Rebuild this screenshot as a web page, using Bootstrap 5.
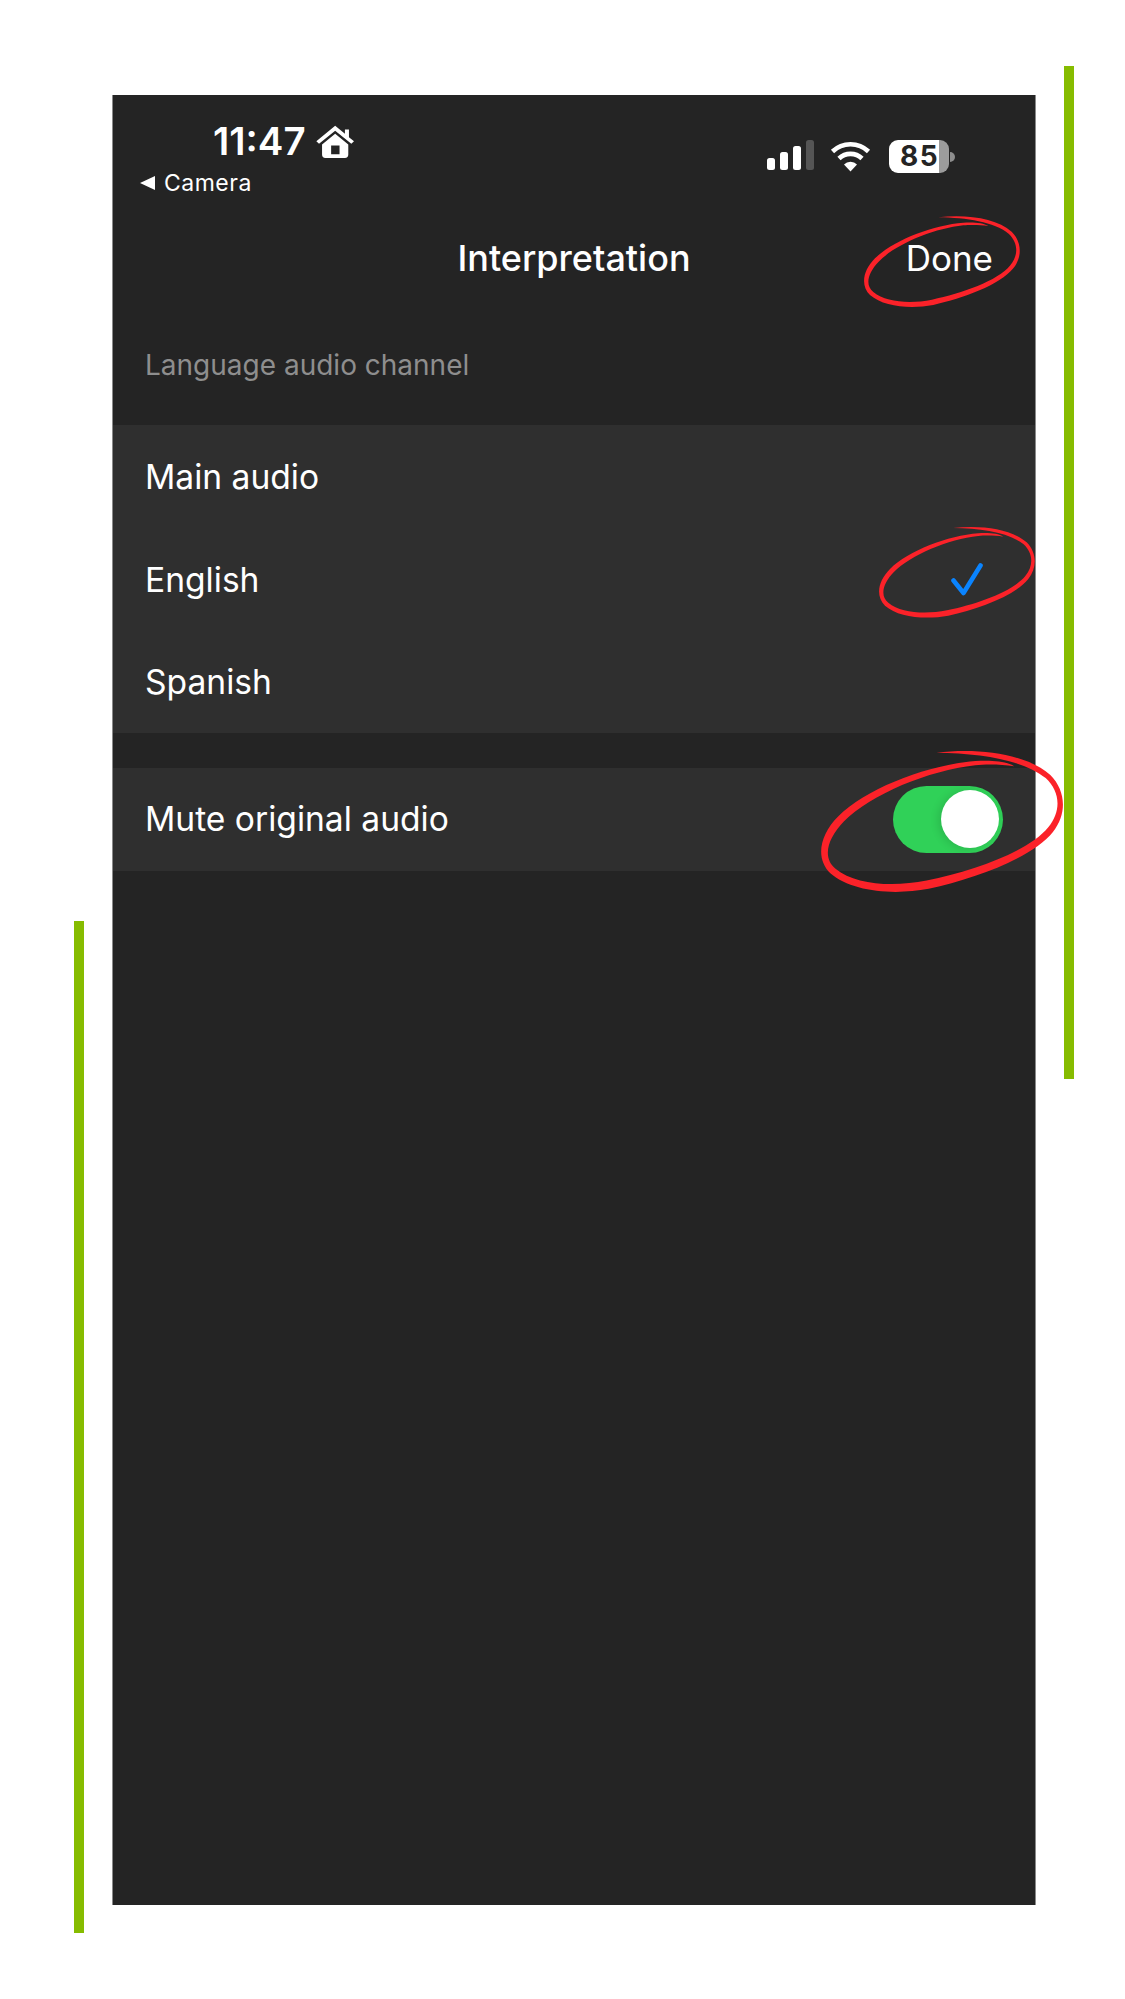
<!DOCTYPE html><html lang="en">
<head>
  <meta charset="UTF-8" />
  <meta name="viewport" content="width=device-width, initial-scale=1.0" />
  <title>Interpretation</title>
  <link href="https://cdn.jsdelivr.net/npm/bootstrap@5.3.0/dist/css/bootstrap.min.css" rel="stylesheet">
  <style>
    body { background: #fff; font-family: Inter, "Liberation Sans", sans-serif; color: #fff; }
    .sheet { width: 1125px; height: 1999px; overflow: hidden; }
    .accent-left { width: 10px; height: 1012px; margin: 921px 28px 0 74px; background: #86bc00; flex: none; }
    .accent-right { width: 10px; height: 1013px; margin: 66px 0 0 28px; background: #86bc00; flex: none; }
    .phone { width: 924px; height: 1810px; margin-top: 95px; background: #242424; border-left: 1px solid #8a8a8a; border-right: 1px solid #8a8a8a; flex: none; }
    .status-area { height: 125px; }
    .status-left { padding: 24px 0 0 27px; }
    .clock-row { padding-left: 73px; height: 44px; gap: 10px; }
    .clock { font-size: 38.5px; font-weight: 600; line-height: 44px; }
    .back-app { font-size: 23px; line-height: 28px; margin-top: 6px; gap: 9px; letter-spacing: .5px; }
    .back-arrow { width: 0; height: 0; border-top: 7.5px solid transparent; border-bottom: 7.5px solid transparent; border-right: 15px solid #fff; }
    .status-right { padding: 45px 80px 0 0; gap: 15px; }
    .battery-wrap { margin-left: 3px; }
    .battery { width: 60px; height: 33px; border-radius: 9px; background: linear-gradient(90deg, #fff 84%, #9c9c9c 84%); color: #242424; font-size: 28px; font-weight: 700; line-height: 33px; padding-left: 11px; letter-spacing: 1.5px; white-space: nowrap; }
    .battery-tip { width: 5px; height: 10px; margin-left: 1px; border-radius: 0 5px 5px 0; background: #8d8d8d; }
    .nav-row { height: 76px; padding-right: 42px; }
    .nav-title { font-size: 36px; font-weight: 500; line-height: 76px; white-space: nowrap; }
    .nav-done { font-size: 35px; line-height: 76px; }
    .group-label { font-size: 28px; line-height: 40px; color: #8e8e8e; padding: 49px 32px 40px; }
    .rows { background: #2f2f2f; font-size: 33.6px; }
    .rows-gap { margin-top: 35px; }
    .row-item { height: 102.67px; padding: 2px 52px 0 32px; }
    .row-item.has-switch { padding: 0 32px; }
    .ios-switch { width: 110px; height: 67px; border-radius: 34px; background: #30d158; padding: 0 4px; }
    .ios-knob { width: 58px; height: 58px; border-radius: 50%; background: #fff; box-shadow: -3px 1px 8px rgba(0, 0, 0, .12); }
    .scribbles { top: 0; left: 0; pointer-events: none; }
  </style>
</head>
<body>
  <div class="sheet d-flex align-items-start position-relative">
    <div class="accent-left"></div>

    <div class="phone">
      <!-- Status bar -->
      <div class="status-area d-flex justify-content-between">
        <div class="status-left">
          <div class="clock-row d-flex align-items-center">
            <span class="clock">11:47</span>
            <svg width="38" height="33" viewBox="620 105 113 98">
              <path d="M677 107 L706 131 V118 H718 V141 L733 153 L725 161 L677 122 L629 161 L621 153 Z" fill="#fff"/>
              <path fill-rule="evenodd" d="M677 131 L716 163 V193 Q716 203 706 203 H648 Q638 203 638 193 V163 Z M665 166 V192 H690 V166 Z" fill="#fff"/>
            </svg>
          </div>
          <div class="back-app d-flex align-items-center">
            <span class="back-arrow"></span>
            <span>Camera</span>
          </div>
        </div>
        <div class="status-right d-flex align-items-start">
          <svg width="48" height="31" viewBox="0 0 48 31">
            <rect x="0" y="18" width="8" height="12" rx="2.5" fill="#fff"/>
            <rect x="13" y="12" width="8" height="18" rx="2.5" fill="#fff"/>
            <rect x="26" y="6" width="8" height="24" rx="2.5" fill="#fff"/>
            <rect x="39" y="0" width="8" height="30" rx="2.5" fill="#555"/>
          </svg>
          <svg width="41" height="32" viewBox="0 0 41 32">
            <path d="M2.5 11.5 A26 26 0 0 1 38.500 11.500" fill="none" stroke="#fff" stroke-width="4.6"/>
            <path d="M9 18.500 A16.500 16.500 0 0 1 32 18.500" fill="none" stroke="#fff" stroke-width="4.6"/>
            <path d="M14 24.500 A9 9 0 0 1 27 24.500 L20.500 31.500 Z" fill="#fff"/>
          </svg>
          <div class="battery-wrap d-flex align-items-center">
            <div class="battery">85</div>
            <div class="battery-tip"></div>
          </div>
        </div>
      </div>

      <!-- Nav bar -->
      <div class="nav-row position-relative d-flex justify-content-end">
        <div class="nav-title position-absolute top-0 start-50 translate-middle-x">Interpretation</div>
        <div class="nav-done">Done</div>
      </div>

      <div class="group-label">Language audio channel</div>

      <div class="rows">
        <div class="row-item d-flex justify-content-between align-items-center"><span>Main audio</span></div>
        <div class="row-item d-flex justify-content-between align-items-center">
          <span>English</span>
          <svg width="32" height="33" viewBox="0 0 32 33">
            <path d="M2.500 17.500 L12.500 30 L29.500 2.500" fill="none" stroke="#0a84ff" stroke-width="4.600" stroke-linecap="round" stroke-linejoin="round"/>
          </svg>
        </div>
        <div class="row-item d-flex justify-content-between align-items-center"><span>Spanish</span></div>
      </div>

      <div class="rows rows-gap">
        <div class="row-item has-switch d-flex justify-content-between align-items-center">
          <span>Mute original audio</span>
          <div class="ios-switch d-flex justify-content-end align-items-center"><div class="ios-knob"></div></div>
        </div>
      </div>
    </div>

    <div class="accent-right"></div>

    <!-- Red marker circles -->
    <svg class="scribbles position-absolute" width="1125" height="1999" viewBox="0 0 1125 1999">
      <defs>
        <path id="scribble" fill="#fb2229" d="M655 322 C740 312 830 325 875 365 C905 395 908 440 880 475 C840 525 730 565 640 585 C570 598 490 590 450 555 C420 525 430 480 465 445 C520 390 640 345 730 338 C760 336 790 338 805 348 C780 344 750 344 730 346 C640 356 528 402 476 455 C444 488 434 525 460 546 C498 577 570 582 636 569 C726 550 833 513 871 466 C897 434 894 397 866 371 C823 336 740 323 655 322 Z"/>
      </defs>
      <use href="#scribble" transform="translate(720 110) scale(.3333)"/>
      <use href="#scribble" transform="translate(780 500) scale(.3333) translate(-135 -238)"/>
      <use href="#scribble" transform="translate(780 720) scale(.3333) translate(120 92) scale(1.553) translate(-430 -318)"/>
    </svg>
  </div>
  <script src="https://cdn.jsdelivr.net/npm/bootstrap@5.3.0/dist/js/bootstrap.bundle.min.js"></script>
</body>
</html>
